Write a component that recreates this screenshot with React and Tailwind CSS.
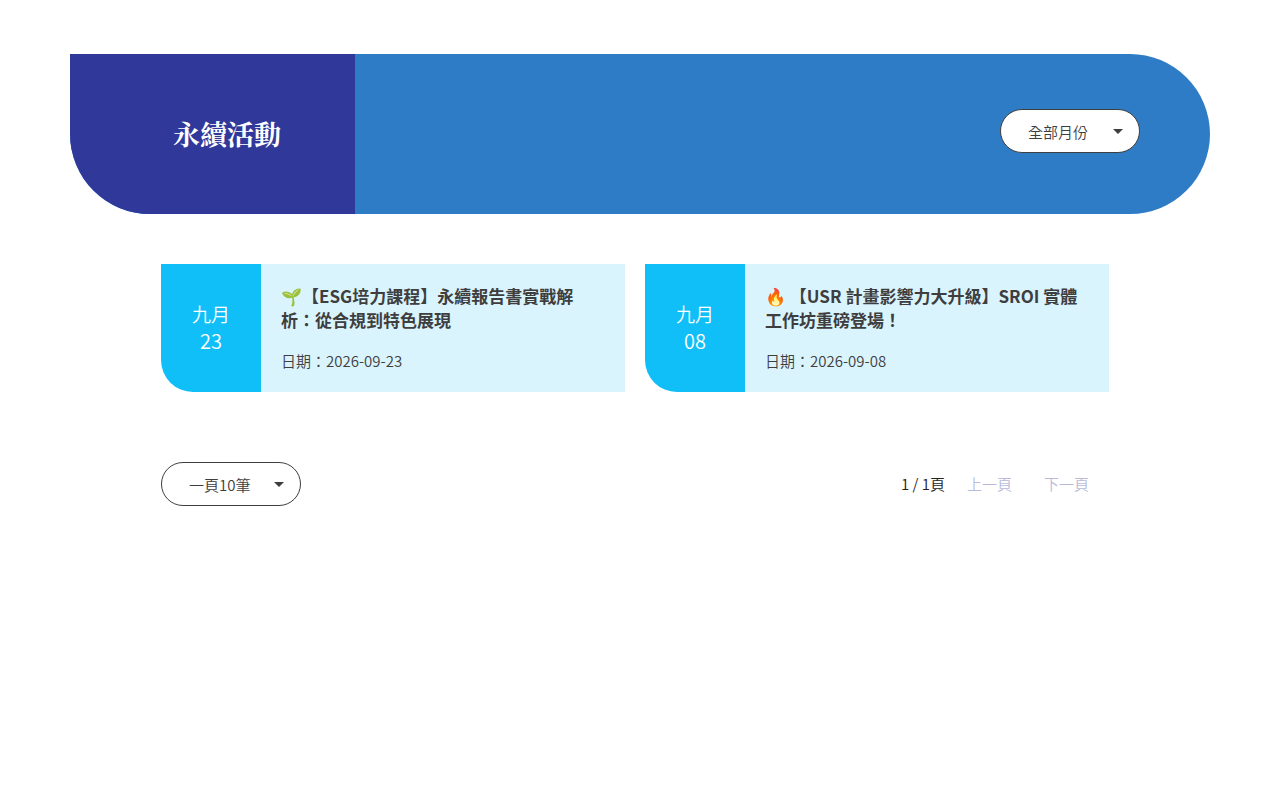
import React, { useState } from 'react'
import clsx from 'clsx'

const events = [
  {
    id: 1,
    month: '九月',
    day: '23',
    title: '🌱【ESG培力課程】永續報告書實戰解析：從合規到特色展現',
    date: '2026-09-23',
  },
  {
    id: 2,
    month: '九月',
    day: '08',
    title: '🔥 【USR 計畫影響力大升級】SROI 實體工作坊重磅登場！',
    date: '2026-09-08',
  },
]

const months = ['一月', '二月', '三月', '四月', '五月', '六月', '七月', '八月', '九月', '十月', '十一月', '十二月']

function PillSelect({ label, className, children, ...props }) {
  return (
    <div className={clsx('relative w-[140px]', className)}>
      <select
        aria-label={label}
        className="block h-11 w-full appearance-none rounded-full border border-[#3e3e3e] bg-white pl-[27px] pr-10 pt-px text-[15px] leading-[22px] text-[#3e3e3e]"
        {...props}
      >
        {children}
      </select>
      <svg viewBox="0 0 10 5" className="pointer-events-none absolute right-[17px] top-5 h-[5px] w-[10px] fill-[#3e3e3e]" aria-hidden="true">
        <path d="M0 0h10L5 5z" />
      </svg>
    </div>
  )
}

function EventCard({ event }) {
  return (
    <a href={`#event-${event.id}`} className="flex bg-[#daf4fe]">
      {/* The white layer shows through the rounded corner */}
      <div className="flex w-[100px] shrink-0 bg-white">
        <div className="flex w-full flex-col items-center justify-center rounded-bl-[32px] bg-[#11bff8] pb-0.5 text-[20px] leading-[27px] text-white">
          <span className="text-[19px]">{event.month}</span>
          <span>{event.day}</span>
        </div>
      </div>
      <div className="flex flex-1 flex-col gap-[18px] p-5 text-[#3e3e3e]">
        <h2 className="text-[17px] font-bold leading-6">{event.title}</h2>
        <p className="text-[15px] leading-[22px]">日期：{event.date}</p>
      </div>
    </a>
  )
}

export default function App() {
  const [month, setMonth] = useState('')
  const [pageSize, setPageSize] = useState('10')

  return (
    <main className="mx-auto max-w-[1280px] px-[70px] pt-[54px] font-['Noto_Sans_CJK_TC',sans-serif] font-[350]">
      <header className="flex h-40 overflow-hidden rounded-r-[80px] rounded-bl-[80px] bg-[#2e7cc6]">
        <div className="flex w-1/4 items-center justify-end bg-[#30399a] pr-[74px]">
          <h1 className="whitespace-nowrap font-['Noto_Serif_CJK_TC','Noto_Serif_TC',serif] text-[27px] font-bold leading-10 text-white">
            永續活動
          </h1>
        </div>
        <div className="flex flex-1 items-center justify-end pb-[6px] pr-[70px]">
          <PillSelect label="月份" value={month} onChange={(e) => setMonth(e.target.value)}>
            <option value="">全部月份</option>
            {months.map((m) => (
              <option key={m} value={m}>{m}</option>
            ))}
          </PillSelect>
        </div>
      </header>

      <div className="pl-[91px] pr-[101px] pt-[50px]">
        <div className="grid grid-cols-2 gap-5">
          {events.map((event) => (
            <EventCard key={event.id} event={event} />
          ))}
        </div>

        <div className="mt-[70px] flex items-center justify-between">
          <PillSelect label="每頁筆數" value={pageSize} onChange={(e) => setPageSize(e.target.value)}>
            <option value="10">一頁10筆</option>
            <option value="20">一頁20筆</option>
            <option value="50">一頁50筆</option>
          </PillSelect>
          <nav className="flex items-center pr-5 text-[15px] leading-[22px] text-[#b9bad9]" aria-label="分頁">
            <span className="mr-[22px] text-[#222222]">1 / 1頁</span>
            <a href="#prev" className="mr-8">上一頁</a>
            <a href="#next">下一頁</a>
          </nav>
        </div>
      </div>
    </main>
  )
}
